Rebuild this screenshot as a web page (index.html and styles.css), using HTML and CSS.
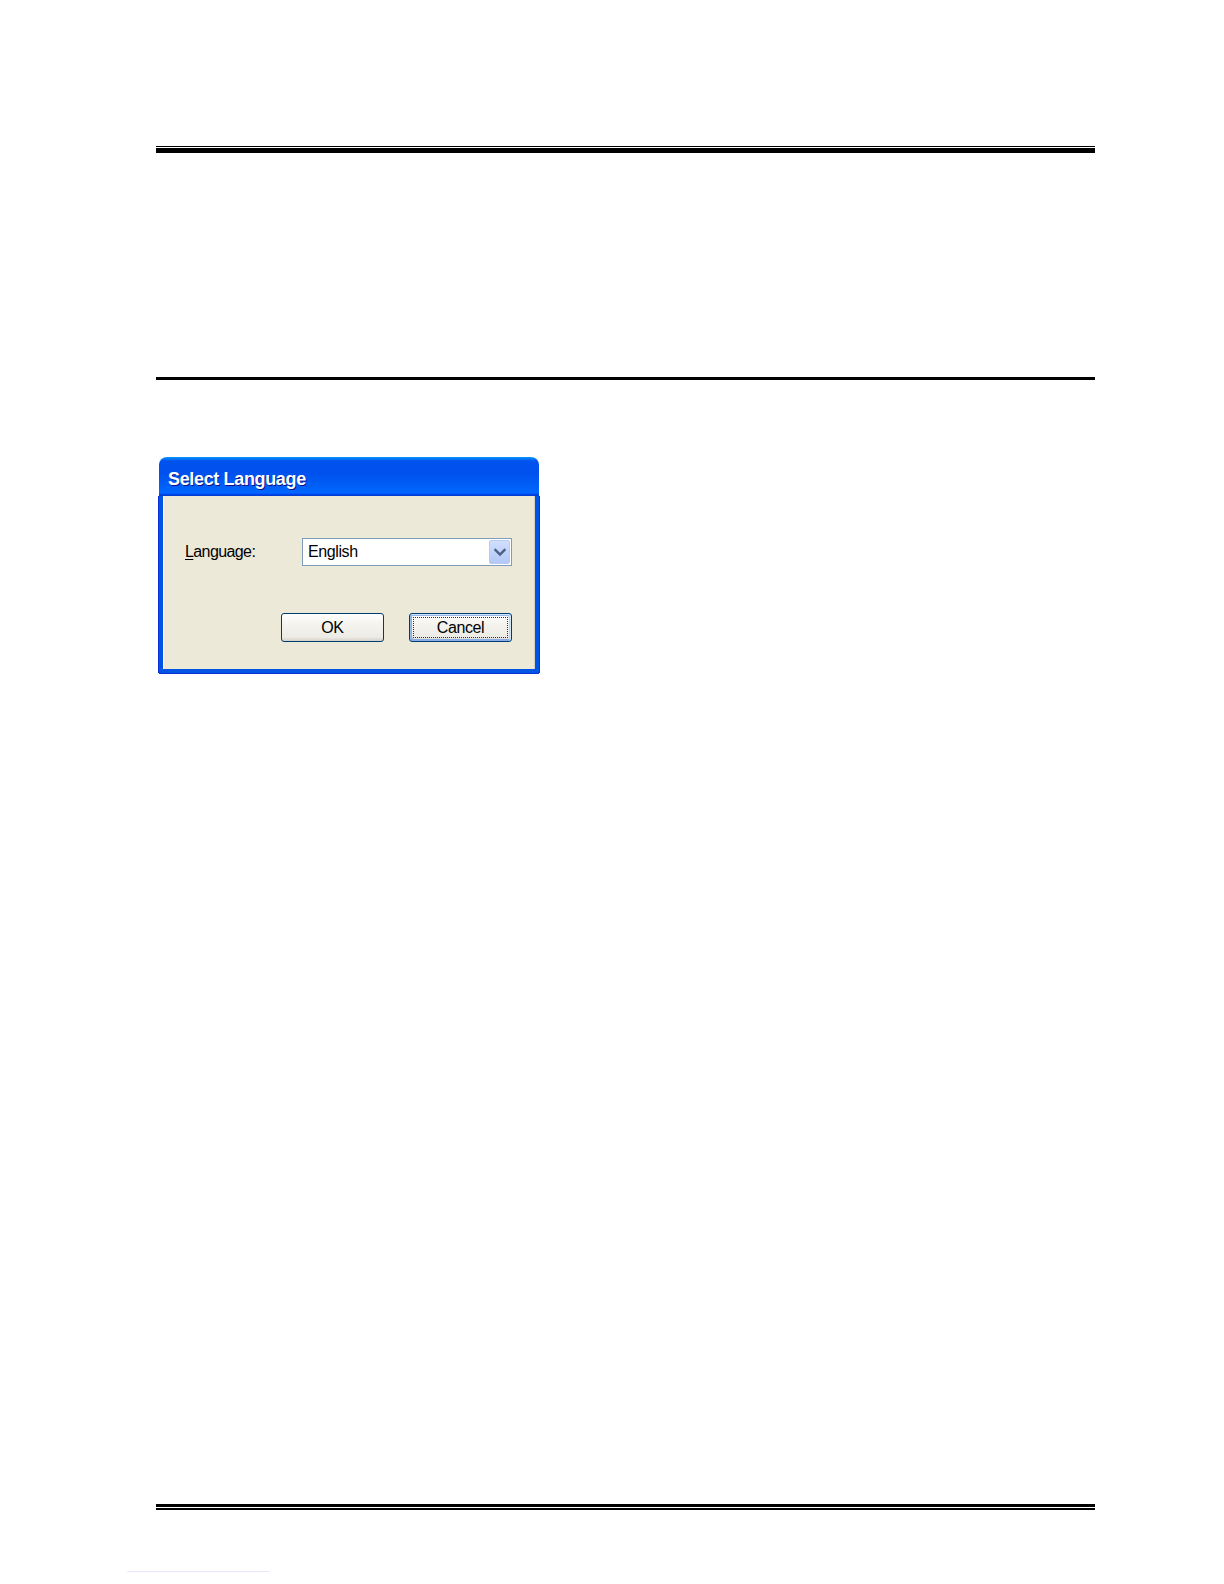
FILE: index.html
```html
<!DOCTYPE html>
<html>
<head>
<meta charset="utf-8">
<link rel="stylesheet" href="styles.css">
</head>
<body>
<div class="page">
  <div class="rule-top"></div>
  <div class="rule-mid"></div>
  <div class="dialog">
    <div class="titlebar">Select Language</div>
    <div class="dialog-body">
      <div class="field-row">
        <span class="label"><u>L</u>anguage:</span>
        <div class="combo">
          <span class="combo-text">English</span>
          <span class="combo-btn">
            <svg width="12" height="9" viewBox="0 0 12 9"><path d="M1.5 2 L6 6.5 L10.5 2" fill="none" stroke="#4d6185" stroke-width="2.4" stroke-linecap="square"/></svg>
          </span>
        </div>
      </div>
      <div class="button-row">
        <button class="btn">OK</button>
        <button class="btn focused"><span class="focus-ring">Cancel</span></button>
      </div>
    </div>
  </div>
  <div class="rule-bottom"></div>
</div>
<div class="footer-link"></div>
</body>
</html>
```

FILE: styles.css
```css
html, body {
  margin: 0;
  padding: 0;
  background: #ffffff;
}

body {
  font-family: "Liberation Sans", Arial, sans-serif;
  width: 1224px;
  min-height: 1584px;
}

.page {
  padding-top: 146px;
  margin-left: 156px;
  width: 939px;
}

.rule-top {
  height: 1px;
  border-top: 1px solid #000;
  border-bottom: 5px solid #000;
}

.rule-mid {
  margin-top: 224px;
  height: 3px;
  background: #000;
}

.dialog {
  margin-top: 77px;
  margin-left: 3px;
  width: 380px;
  height: 216px;
  display: flex;
  flex-direction: column;
}

.titlebar {
  height: 39px;
  flex: none;
  border-radius: 8px 8px 0 0;
  background: linear-gradient(to bottom, #0997ff 0%, #0053ee 10%, #0050ee 40%, #0062f8 80%, #0066ff 90%, #005bff 94%, #003dd7 97%, #003dd7 100%);
  color: #ffffff;
  font-weight: bold;
  font-size: 18px;
  letter-spacing: -0.35px;
  line-height: 34px;
  padding: 5px 0 0 9px;
  text-shadow: 1px 1px 0 #0f1089;
  box-sizing: border-box;
}

.dialog-body {
  flex: 1;
  background: #ece9d8;
  border: 4px solid #0054e3;
  border-top: none;
  box-shadow: inset 1px 0 0 #fbfaf6, inset -1px 0 0 #d6d2c2, -1px 0 0 #0831d9, 1px 0 0 #0831d9, 0 1px 0 #0831d9;
  display: flex;
  flex-direction: column;
  padding: 42px 23px 0 22px;
}

.field-row {
  display: flex;
  align-items: center;
  height: 28px;
}

.label {
  font-size: 16px;
  letter-spacing: -0.6px;
  color: #000;
  width: 117px;
  flex: none;
}

.label u {
  text-decoration-thickness: 1px;
  text-underline-offset: 2px;
}

.combo {
  width: 211px;
  height: 28px;
  box-sizing: border-box;
  background: #fff;
  border: 1px solid #7f9db9;
  display: flex;
  align-items: center;
  justify-content: space-between;
  padding: 1px;
}

.combo-text {
  font-size: 16px;
  letter-spacing: -0.4px;
  padding-left: 4px;
  color: #000;
}

.combo-btn {
  width: 21px;
  height: 24px;
  box-sizing: border-box;
  border: 1px solid #b9cbf3;
  border-radius: 2px;
  background: linear-gradient(to bottom, #d2defb 0%, #c1d3fb 50%, #b4c8f6 100%);
  display: flex;
  align-items: center;
  justify-content: center;
}

.button-row {
  margin-top: 47px;
  display: flex;
  justify-content: flex-end;
  gap: 25px;
}

.btn {
  width: 103px;
  height: 29px;
  box-sizing: border-box;
  border: 1px solid #003c74;
  border-radius: 3px;
  background: linear-gradient(to bottom, #ffffff 0%, #f4f3ee 40%, #ecebe6 86%, #d6d0c5 100%);
  font-family: "Liberation Sans", Arial, sans-serif;
  font-size: 16px;
  letter-spacing: -0.4px;
  color: #000;
  padding: 0;
  display: flex;
  align-items: center;
  justify-content: center;
}

.btn.focused {
  box-shadow: inset -1px 1px #cee7ff, inset 1px 2px #98b8ea, inset -2px 2px #bcd4f6, inset 1px -1px #89ade4, inset 2px -2px #89ade4;
  padding: 3px;
}

.focus-ring {
  flex: 1;
  align-self: stretch;
  border: 1px dotted #333;
  display: flex;
  align-items: center;
  justify-content: center;
}

.rule-bottom {
  margin-top: 831px;
  height: 1px;
  border-top: 3px solid #000;
  border-bottom: 2px solid #000;
}

.footer-link {
  margin-top: 61px;
  margin-left: 127px;
  width: 143px;
  height: 1px;
  background: #e6e8ff;
}
```
